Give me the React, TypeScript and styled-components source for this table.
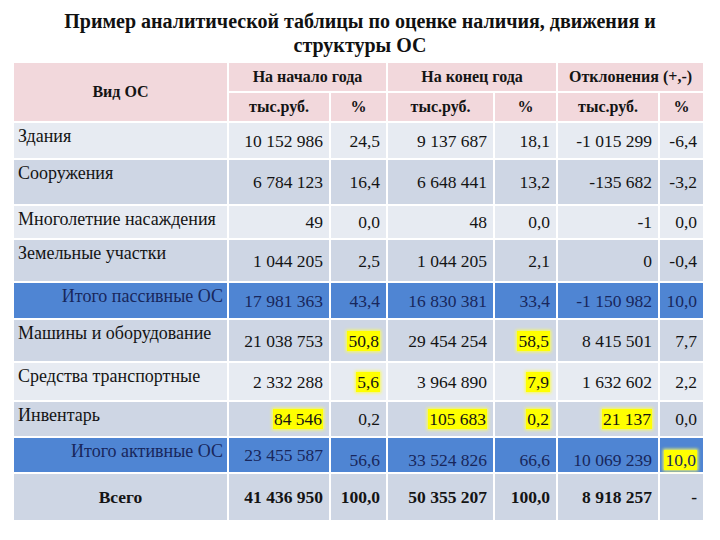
import React from "react";
import styled, { createGlobalStyle, css } from "styled-components";

const Global = createGlobalStyle`
  html, body { margin: 0; padding: 0; background: #ffffff; }
  body, table { font-family: "Liberation Serif", "DejaVu Serif", serif; color: #111; }
`;

type Kind = "light" | "dark" | "total" | "sum";

interface Cell {
  v: string;
  hl?: boolean;
  low?: boolean;
}

interface Row {
  label: string;
  kind: Kind;
  h: number;
  cells: Cell[];
}

const c = (v: string, hl = false, low = false): Cell => ({ v, hl, low });

const rows: Row[] = [
  { label: "Здания", kind: "light", h: 37, cells: [c("10 152 986"), c("24,5"), c("9 137 687"), c("18,1"), c("-1 015 299"), c("-6,4")] },
  { label: "Сооружения", kind: "dark", h: 46, cells: [c("6 784 123"), c("16,4"), c("6 648 441"), c("13,2"), c("-135 682"), c("-3,2")] },
  { label: "Многолетние насаждения", kind: "light", h: 34, cells: [c("49"), c("0,0"), c("48"), c("0,0"), c("-1"), c("0,0")] },
  { label: "Земельные участки", kind: "dark", h: 43, cells: [c("1 044 205"), c("2,5"), c("1 044 205"), c("2,1"), c("0"), c("-0,4")] },
  { label: "Итого пассивные ОС", kind: "total", h: 37, cells: [c("17 981 363"), c("43,4"), c("16 830 381"), c("33,4"), c("-1 150 982"), c("10,0")] },
  { label: "Машины и оборудование", kind: "dark", h: 43, cells: [c("21 038 753"), c("50,8", true), c("29 454 254"), c("58,5", true), c("8 415 501"), c("7,7")] },
  { label: "Средства транспортные", kind: "light", h: 39, cells: [c("2 332 288"), c("5,6", true), c("3 964 890"), c("7,9", true), c("1 632 602"), c("2,2")] },
  { label: "Инвентарь", kind: "dark", h: 36, cells: [c("84 546", true), c("0,2"), c("105 683", true), c("0,2", true), c("21 137", true), c("0,0")] },
  { label: "Итого активные ОС", kind: "total", h: 36, cells: [c("23 455 587"), c("56,6", false, true), c("33 524 826", false, true), c("66,6", false, true), c("10 069 239", false, true), c("10,0", true, true)] },
  { label: "Всего", kind: "sum", h: 48, cells: [c("41 436 950"), c("100,0"), c("50 355 207"), c("100,0"), c("8 918 257"), c("-")] },
];

const colWidths = [215, 102, 57, 107, 63, 102, 45];

const bg: Record<Kind, string> = {
  light: "#e7ebf2",
  dark: "#ced6e4",
  total: "#4f85d3",
  sum: "#ced6e4",
};

const Page = styled.div`
  width: 720px;
  height: 540px;
  padding-top: 9px;
  box-sizing: border-box;
`;

const Title = styled.h1`
  margin: 0 0 4px;
  text-align: center;
  font-size: 20px;
  line-height: 24px;
  font-weight: bold;
  color: #111;
`;

const Table = styled.table`
  margin-left: 12px;
  border-collapse: collapse;
  table-layout: fixed;
  width: ${colWidths.reduce((a, b) => a + b, 0)}px;
  font-family: "Liberation Serif", "DejaVu Serif", serif;
  font-size: 17.5px;
`;

const HeadCell = styled.th<{ $h?: number }>`
  background: #f2d8dc;
  border: 2px solid #ffffff;
  font-weight: bold;
  font-size: 16px;
  text-align: center;
  height: ${(p) => p.$h ?? 24}px;
  padding: 0;
  color: #141414;
`;

const BodyRow = styled.tr<{ $kind: Kind; $h: number }>`
  background: ${(p) => bg[p.$kind]};
  height: ${(p) => p.$h}px;
  color: ${(p) => (p.$kind === "total" ? "#18275c" : "#141414")};
  font-weight: ${(p) => (p.$kind === "sum" ? "bold" : "normal")};
`;

const Label = styled.td<{ $kind: Kind }>`
  border: 2px solid #ffffff;
  padding: 3px 4px 0;
  vertical-align: top;
  line-height: 20px;
  font-size: 18px;
  white-space: nowrap;
  ${(p) =>
    p.$kind === "total" &&
    css`
      text-align: right;
    `}
  ${(p) =>
    p.$kind === "sum" &&
    css`
      text-align: center;
      vertical-align: middle;
      font-size: 17.5px;
      padding: 0;
    `}
`;

const Num = styled.td<{ $low?: boolean }>`
  border: 2px solid #ffffff;
  padding: 0 6px ${(p) => (p.$low ? "2px" : "0")} 3px;
  text-align: right;
  white-space: nowrap;
  vertical-align: ${(p) => (p.$low ? "bottom" : "middle")};
  line-height: 20px;
`;

const Mark = styled.span`
  background: #ffff00;
  box-shadow: 0 0 3px 1px #fbfb5a;
  padding: 0 1px;
`;

export default function App() {
  return (
    <Page>
      <Global />
      <Title>
        Пример аналитической таблицы по оценке наличия, движения и
        <br />
        структуры ОС
      </Title>
      <Table>
        <colgroup>
          {colWidths.map((w, i) => (
            <col key={i} style={{ width: w }} />
          ))}
        </colgroup>
        <thead>
          <tr>
            <HeadCell rowSpan={2}>Вид ОС</HeadCell>
            <HeadCell colSpan={2} $h={28}>На начало года</HeadCell>
            <HeadCell colSpan={2} $h={28}>На конец года</HeadCell>
            <HeadCell colSpan={2} $h={28}>Отклонения (+,-)</HeadCell>
          </tr>
          <tr>
            <HeadCell $h={28}>тыс.руб.</HeadCell>
            <HeadCell $h={28}>%</HeadCell>
            <HeadCell $h={28}>тыс.руб.</HeadCell>
            <HeadCell $h={28}>%</HeadCell>
            <HeadCell $h={28}>тыс.руб.</HeadCell>
            <HeadCell $h={28}>%</HeadCell>
          </tr>
        </thead>
        <tbody>
          {rows.map((r) => (
            <BodyRow key={r.label} $kind={r.kind} $h={r.h}>
              <Label $kind={r.kind}>{r.label}</Label>
              {r.cells.map((cell, i) => (
                <Num key={i} $low={cell.low}>
                  {cell.hl ? <Mark>{cell.v}</Mark> : cell.v}
                </Num>
              ))}
            </BodyRow>
          ))}
        </tbody>
      </Table>
    </Page>
  );
}
